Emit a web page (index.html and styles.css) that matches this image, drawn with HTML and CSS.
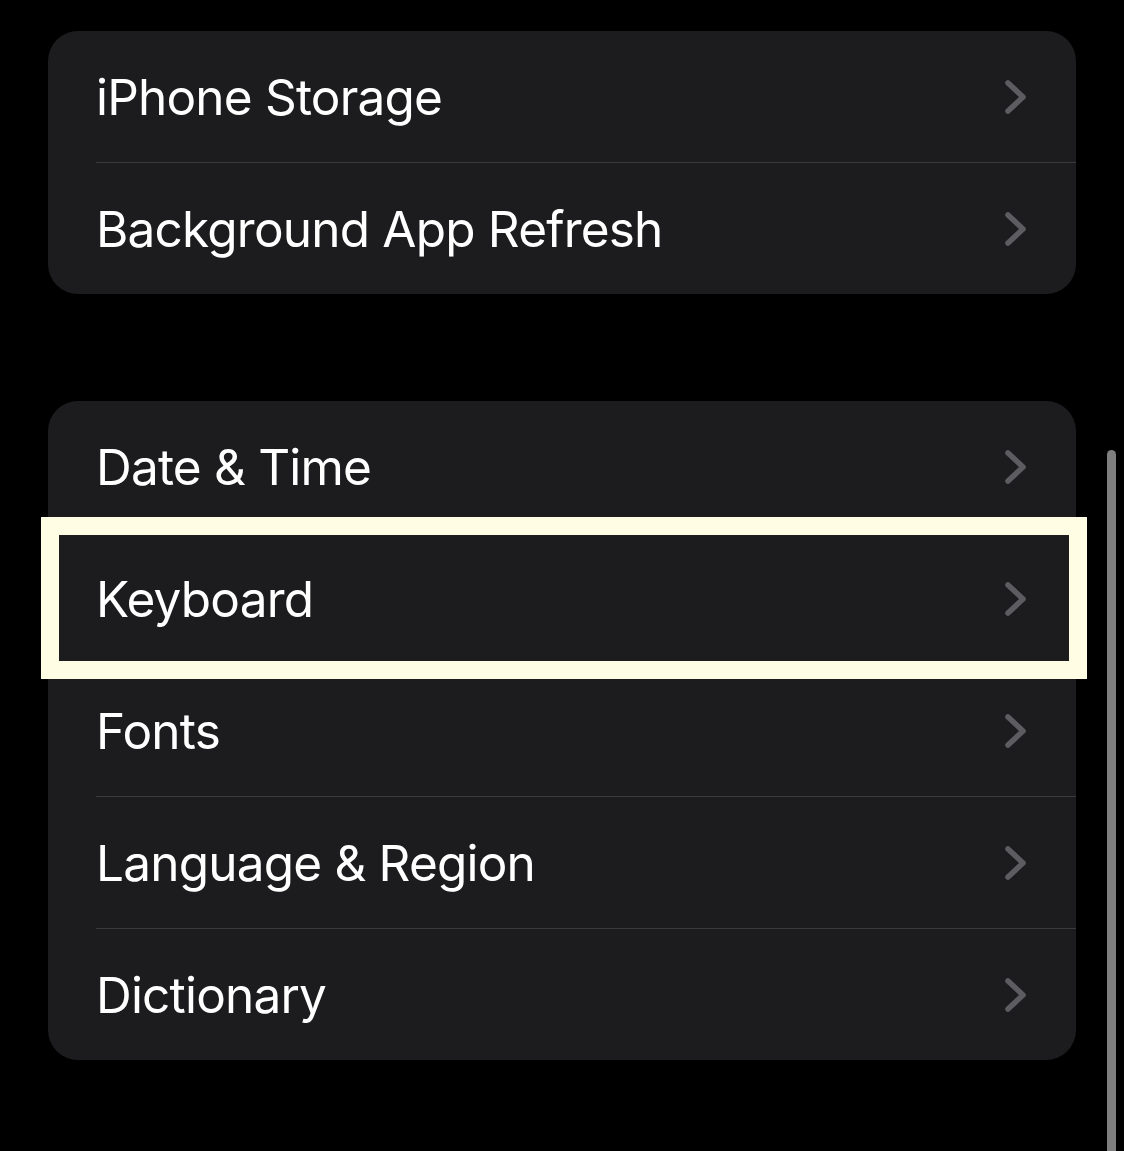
FILE: index.html
```html
<!DOCTYPE html>
<html>
<head>
<title>General</title>
<link rel="stylesheet" href="styles.css">
</head>
<body>
<div class="page">
  <div class="group">
    <div class="row">
      <div class="row-inner">
        <span class="label">iPhone Storage</span>
        <svg class="chevron" viewBox="0 0 24 36"><path d="M4 4 L19 18 L4 32"/></svg>
      </div>
    </div>
    <div class="row">
      <div class="row-inner">
        <span class="label">Background App Refresh</span>
        <svg class="chevron" viewBox="0 0 24 36"><path d="M4 4 L19 18 L4 32"/></svg>
      </div>
    </div>
  </div>

  <div class="group">
    <div class="row">
      <div class="row-inner">
        <span class="label">Date &amp; Time</span>
        <svg class="chevron" viewBox="0 0 24 36"><path d="M4 4 L19 18 L4 32"/></svg>
      </div>
    </div>
    <div class="row selected">
      <div class="row-inner">
        <span class="label">Keyboard</span>
        <svg class="chevron" viewBox="0 0 24 36"><path d="M4 4 L19 18 L4 32"/></svg>
      </div>
      <div class="focus-ring"></div>
    </div>
    <div class="row">
      <div class="row-inner">
        <span class="label">Fonts</span>
        <svg class="chevron" viewBox="0 0 24 36"><path d="M4 4 L19 18 L4 32"/></svg>
      </div>
    </div>
    <div class="row">
      <div class="row-inner">
        <span class="label">Language &amp; Region</span>
        <svg class="chevron" viewBox="0 0 24 36"><path d="M4 4 L19 18 L4 32"/></svg>
      </div>
    </div>
    <div class="row">
      <div class="row-inner">
        <span class="label">Dictionary</span>
        <svg class="chevron" viewBox="0 0 24 36"><path d="M4 4 L19 18 L4 32"/></svg>
      </div>
    </div>
  </div>
</div>
<div class="scrollbar"></div>
</body>
</html>
```

FILE: styles.css
```css
html, body {
  margin: 0;
  background: #000;
  height: 100%;
  overflow: hidden;
}

body {
  font-family: Inter, "Liberation Sans", sans-serif;
  color: #fff;
}

.page {
  padding: 31px 0 0 48px;
  width: 1028px;
  display: flex;
  flex-direction: column;
  gap: 107px;
}

.group {
  background: #1c1c1e;
  border-radius: 30px;
}

.row {
  position: relative;
  padding-left: 48px;
}

.row-inner {
  height: 131px;
  display: flex;
  align-items: center;
  justify-content: space-between;
  border-bottom: 1px solid #3a3a3c;
}

.row:last-child .row-inner {
  border-bottom: none;
}

.label {
  font-size: 49.5px;
  letter-spacing: -0.8px;
}

.chevron {
  width: 24px;
  height: 36px;
  margin-right: 48px;
  fill: none;
  stroke: #5d5d61;
  stroke-width: 5.5;
  stroke-linecap: round;
  stroke-linejoin: round;
}

.focus-ring {
  position: absolute;
  left: -7px;
  top: -16px;
  width: 1010px;
  height: 126px;
  border: 18px solid #fffde4;
}

.scrollbar {
  position: absolute;
  left: 1107px;
  top: 450px;
  width: 9px;
  height: 720px;
  background: #7f7f7f;
  border-radius: 5px 5px 0 0;
}
```
